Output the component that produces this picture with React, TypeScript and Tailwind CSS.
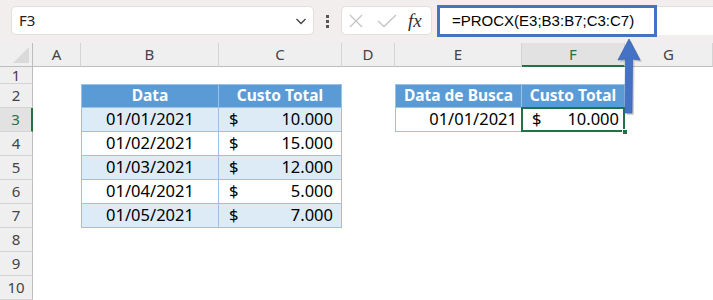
import clsx from "clsx";

type Spec = { text: string; kind: "head" | "date" | "dateRight" | "money" };

const COLS = ["A", "B", "C", "D", "E", "F", "G"];
const ROWS = [1, 2, 3, 4, 5, 6, 7, 8, 9, 10];

const cells: Record<string, Spec> = {
  B2: { text: "Data", kind: "head" },
  C2: { text: "Custo Total", kind: "head" },
  B3: { text: "01/01/2021", kind: "date" },
  B4: { text: "01/02/2021", kind: "date" },
  B5: { text: "01/03/2021", kind: "date" },
  B6: { text: "01/04/2021", kind: "date" },
  B7: { text: "01/05/2021", kind: "date" },
  C3: { text: "10.000", kind: "money" },
  C4: { text: "15.000", kind: "money" },
  C5: { text: "12.000", kind: "money" },
  C6: { text: "5.000", kind: "money" },
  C7: { text: "7.000", kind: "money" },
  E2: { text: "Data de Busca", kind: "head" },
  F2: { text: "Custo Total", kind: "head" },
  E3: { text: "01/01/2021", kind: "dateRight" },
  F3: { text: "10.000", kind: "money" },
};

function SheetCell({ col, row }: { col: string; row: number }) {
  const inFirst = (col === "B" || col === "C") && row >= 2 && row <= 7;
  const inSecond = (col === "E" || col === "F") && row >= 2 && row <= 3;
  if (!inFirst && !inSecond) return <div className="bg-white" />;

  const spec = cells[col + row];
  const selected = col === "F" && row === 3;
  const banded = inFirst && row % 2 === 1;

  return (
    <div
      className={clsx(
        "relative flex items-center border-r border-b border-[#9bc2e6] leading-none text-black",
        (col === "B" || col === "E") && "border-l",
        row === 2 && "border-t",
        spec.kind === "head" && "justify-center bg-[#5b9bd5] text-[15.5px] font-bold text-white",
        spec.kind !== "head" && "text-[16.5px]",
        spec.kind !== "head" && (banded ? "bg-[#ddebf7]" : "bg-white"),
        spec.kind === "date" && "justify-center",
        spec.kind === "dateRight" && "justify-end pr-[4px]",
        spec.kind === "money" && "justify-between pl-[10px]",
        spec.kind === "money" && (selected ? "pr-[5px]" : "pr-[8px]")
      )}
    >
      {spec.kind === "money" ? (
        <>
          <span>$</span>
          <span>{spec.text}</span>
        </>
      ) : (
        <span>{spec.text}</span>
      )}
      {selected && (
        <>
          <div className="absolute -top-px -left-px -right-px -bottom-px border-2 border-[#217346]" />
          <div className="absolute -right-[4px] -bottom-[4px] h-[6px] w-[6px] border border-white bg-[#217346]" />
        </>
      )}
    </div>
  );
}

export default function App() {
  return (
    <div
      className="relative h-[300px] w-[713px] overflow-hidden bg-white"
      style={{ fontFamily: '"Liberation Sans", Arial, sans-serif' }}
    >
      {/* formula bar */}
      <div className="flex h-[43px] items-start bg-[#f3eeee] pl-[11px]">
        <div className="mt-[6px] flex h-[29px] w-[303px] items-center justify-between rounded-[5px] border border-[#e4dede] bg-white pl-[7px] pr-[5px]">
          <span className="text-[15px] text-[#222]" style={{ fontFamily: '"Noto Sans", sans-serif' }}>
            F3
          </span>
          <svg width="14" height="14" viewBox="0 0 14 14" fill="none" stroke="#444" strokeWidth="1.3">
            <path d="M2.5 5 L7 9.5 L11.5 5" />
          </svg>
        </div>
        <div className="mt-[15px] flex w-[27px] flex-col items-center gap-[2px]">
          <div className="h-[3px] w-[3px] bg-[#555]" />
          <div className="h-[3px] w-[3px] bg-[#555]" />
          <div className="h-[3px] w-[3px] bg-[#555]" />
        </div>
        <div className="mt-[6px] flex h-[29px] w-[91px] items-center rounded-[5px] border border-[#e4dede] bg-white pl-[6px]">
          <svg width="16" height="16" viewBox="0 0 16 16" fill="none" stroke="#c4c4c4" strokeWidth="1.3">
            <path d="M2 2 L14 14 M14 2 L2 14" />
          </svg>
          <svg className="ml-[13px]" width="20" height="14" viewBox="0 0 20 14" fill="none" stroke="#c4c4c4" strokeWidth="1.3">
            <path d="M1 7 L7 12.5 L19 1" />
          </svg>
          <span
            className="ml-[11px] text-[19px] italic leading-none text-[#333]"
            style={{ fontFamily: '"Liberation Serif", serif' }}
          >
            fx
          </span>
        </div>
        <div className="ml-[5px] mt-[5px] flex h-[32px] w-[220px] items-center border-[3px] border-[#4472c4] bg-white pl-[12px]">
          <span className="text-[15px] text-black">=PROCX(E3;B3:B7;C3:C7)</span>
        </div>
        <div className="mt-[6px] h-[29px] flex-1 border-t border-[#e4dede] bg-white" />
      </div>

      {/* grid */}
      <div
        className="grid grid-cols-[33px_48px_138px_123px_53px_127px_103px_1fr] grid-rows-[24px_17px_repeat(9,24px)]"
        style={{ fontFamily: '"Noto Sans", sans-serif' }}
      >
        <div className="relative border-r border-b border-[#bdbdbd] bg-[#efefef]">
          <svg className="absolute bottom-[3px] right-[3px]" width="16" height="16" viewBox="0 0 16 16">
            <polygon points="16,0 16,16 0,16" fill="#dadada" />
          </svg>
        </div>
        {COLS.map((c) => (
          <div
            key={c}
            className={clsx(
              "flex items-center justify-center border-r text-[15px]",
              c === "F"
                ? "border-b-2 border-r-[#d4d4d4] border-b-[#217346] bg-[#e2e2e2] text-[#217346]"
                : "border-b border-r-[#d4d4d4] border-b-[#bdbdbd] bg-[#efefef] text-[#444]"
            )}
          >
            {c}
          </div>
        ))}
        {ROWS.map((r) => (
          <div key={r} className="contents">
            <div
              className={clsx(
                "flex items-center justify-center border-b border-b-[#d4d4d4] text-[15px] leading-none",
                r === 3
                  ? "border-r-2 border-r-[#217346] bg-[#e2e2e2] text-[#217346]"
                  : "border-r border-r-[#bdbdbd] bg-[#efefef] text-[#444]"
              )}
            >
              {r}
            </div>
            {COLS.map((c) => (
              <SheetCell key={c} col={c} row={r} />
            ))}
          </div>
        ))}
      </div>

      {/* callout arrow */}
      <svg className="pointer-events-none absolute left-0 top-0" width="713" height="300" viewBox="0 0 713 300">
        <polygon
          points="631,41 642,62 634.5,61 634,115 627,115 627.5,61 620,62"
          fill="rgba(0,0,0,0.18)"
        />
        <polygon
          points="629,39 640,60 632.5,59 632,113 625,113 625.5,59 618,60"
          fill="#4472c4"
          stroke="#3a64b0"
          strokeWidth="0.8"
          strokeLinejoin="round"
        />
      </svg>
    </div>
  );
}
